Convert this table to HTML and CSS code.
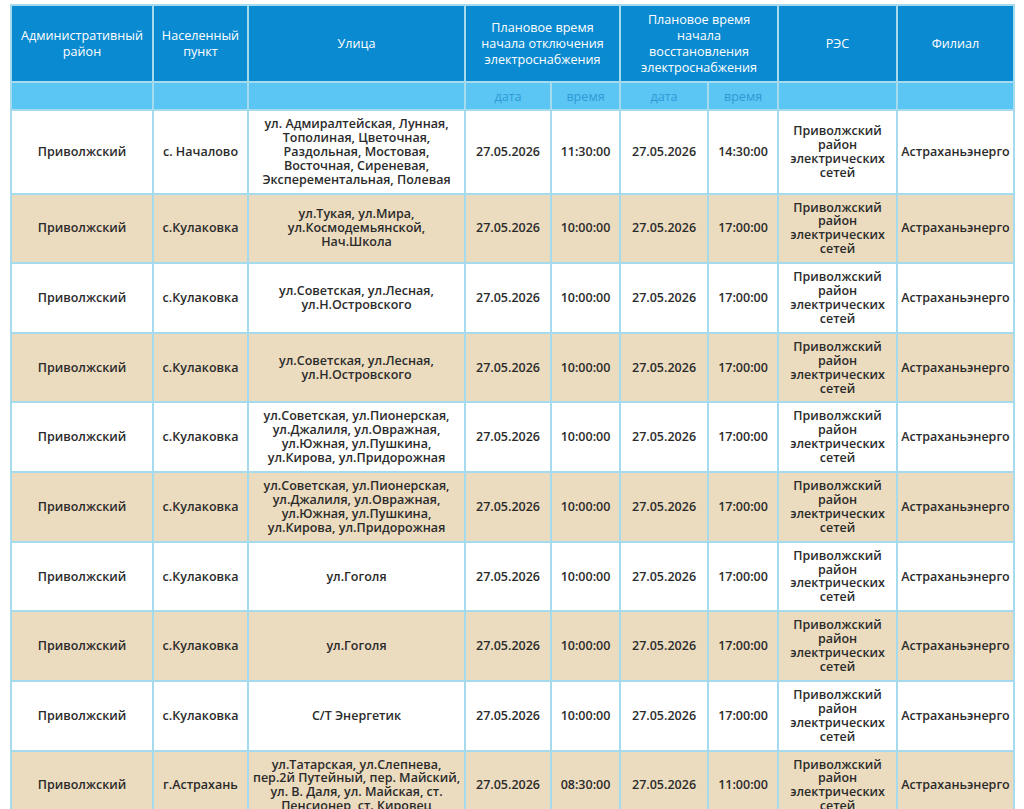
FILE: index.html
```html
<!DOCTYPE html>
<html lang="ru">
<head>
<meta charset="utf-8">
<title>Отключения</title>
<link rel="stylesheet" href="styles.css">
</head>
<body>
<table class="grid">
  <colgroup>
    <col class="c1"><col class="c2"><col class="c3"><col class="c4"><col class="c5"><col class="c6"><col class="c7"><col class="c8"><col class="c9">
  </colgroup>
  <thead>
    <tr class="head">
      <th>Административный<br>район</th>
      <th>Населенный<br>пункт</th>
      <th>Улица</th>
      <th colspan="2">Плановое время<br>начала отключения<br>электроснабжения</th>
      <th colspan="2">Плановое время<br>начала<br>восстановления<br>электроснабжения</th>
      <th>РЭС</th>
      <th>Филиал</th>
    </tr>
    <tr class="sub">
      <th></th><th></th><th></th>
      <th>дата</th><th>время</th><th>дата</th><th>время</th>
      <th></th><th></th>
    </tr>
  </thead>
  <tbody>
    <tr>
      <td>Приволжский</td><td>с. Началово</td>
      <td>ул. Адмиралтейская, Лунная,<br>Тополиная, Цветочная,<br>Раздольная, Мостовая,<br>Восточная, Сиреневая,<br>Эксперементальная, Полевая</td>
      <td>27.05.2026</td><td>11:30:00</td><td>27.05.2026</td><td>14:30:00</td>
      <td>Приволжский<br>район<br>электрических<br>сетей</td><td>Астраханьэнерго</td>
    </tr>
    <tr class="alt">
      <td>Приволжский</td><td>с.Кулаковка</td>
      <td>ул.Тукая, ул.Мира,<br>ул.Космодемьянской,<br>Нач.Школа</td>
      <td>27.05.2026</td><td>10:00:00</td><td>27.05.2026</td><td>17:00:00</td>
      <td>Приволжский<br>район<br>электрических<br>сетей</td><td>Астраханьэнерго</td>
    </tr>
    <tr>
      <td>Приволжский</td><td>с.Кулаковка</td>
      <td>ул.Советская, ул.Лесная,<br>ул.Н.Островского</td>
      <td>27.05.2026</td><td>10:00:00</td><td>27.05.2026</td><td>17:00:00</td>
      <td>Приволжский<br>район<br>электрических<br>сетей</td><td>Астраханьэнерго</td>
    </tr>
    <tr class="alt">
      <td>Приволжский</td><td>с.Кулаковка</td>
      <td>ул.Советская, ул.Лесная,<br>ул.Н.Островского</td>
      <td>27.05.2026</td><td>10:00:00</td><td>27.05.2026</td><td>17:00:00</td>
      <td>Приволжский<br>район<br>электрических<br>сетей</td><td>Астраханьэнерго</td>
    </tr>
    <tr>
      <td>Приволжский</td><td>с.Кулаковка</td>
      <td>ул.Советская, ул.Пионерская,<br>ул.Джалиля, ул.Овражная,<br>ул.Южная, ул.Пушкина,<br>ул.Кирова, ул.Придорожная</td>
      <td>27.05.2026</td><td>10:00:00</td><td>27.05.2026</td><td>17:00:00</td>
      <td>Приволжский<br>район<br>электрических<br>сетей</td><td>Астраханьэнерго</td>
    </tr>
    <tr class="alt">
      <td>Приволжский</td><td>с.Кулаковка</td>
      <td>ул.Советская, ул.Пионерская,<br>ул.Джалиля, ул.Овражная,<br>ул.Южная, ул.Пушкина,<br>ул.Кирова, ул.Придорожная</td>
      <td>27.05.2026</td><td>10:00:00</td><td>27.05.2026</td><td>17:00:00</td>
      <td>Приволжский<br>район<br>электрических<br>сетей</td><td>Астраханьэнерго</td>
    </tr>
    <tr>
      <td>Приволжский</td><td>с.Кулаковка</td>
      <td>ул.Гоголя</td>
      <td>27.05.2026</td><td>10:00:00</td><td>27.05.2026</td><td>17:00:00</td>
      <td>Приволжский<br>район<br>электрических<br>сетей</td><td>Астраханьэнерго</td>
    </tr>
    <tr class="alt">
      <td>Приволжский</td><td>с.Кулаковка</td>
      <td>ул.Гоголя</td>
      <td>27.05.2026</td><td>10:00:00</td><td>27.05.2026</td><td>17:00:00</td>
      <td>Приволжский<br>район<br>электрических<br>сетей</td><td>Астраханьэнерго</td>
    </tr>
    <tr>
      <td>Приволжский</td><td>с.Кулаковка</td>
      <td>С/Т Энергетик</td>
      <td>27.05.2026</td><td>10:00:00</td><td>27.05.2026</td><td>17:00:00</td>
      <td>Приволжский<br>район<br>электрических<br>сетей</td><td>Астраханьэнерго</td>
    </tr>
    <tr class="alt">
      <td>Приволжский</td><td>г.Астрахань</td>
      <td>ул.Татарская, ул.Слепнева,<br>пер.2й Путейный, пер. Майский,<br>ул. В. Даля, ул. Майская, ст.<br>Пенсионер, ст. Кировец</td>
      <td>27.05.2026</td><td>08:30:00</td><td>27.05.2026</td><td>11:00:00</td>
      <td>Приволжский<br>район<br>электрических<br>сетей</td><td>Астраханьэнерго</td>
    </tr>
  </tbody>
</table>
</body>
</html>
```

FILE: styles.css
```css
html, body {
  margin: 0;
  padding: 0;
  background: #ffffff;
}
body {
  padding: 4px 10px 0 10px;
  font-family: "Open Sans", "Noto Sans", "DejaVu Sans", sans-serif;
  color: #2b2b2b;
}
.grid {
  border-collapse: collapse;
  width: 1003px;
  table-layout: fixed;
}
.c1 { width: 142px; }
.c2 { width: 95px; }
.c3 { width: 217px; }
.c4 { width: 86px; }
.c5 { width: 69px; }
.c6 { width: 88px; }
.c7 { width: 70px; }
.c8 { width: 119px; }
.c9 { width: 117px; }

.grid th, .grid td {
  border: 2px solid #a6dbee;
  text-align: center;
  vertical-align: middle;
}
.head th {
  background: #0a8ad0;
  color: #ffffff;
  font-weight: 400;
  font-size: 12.6px;
  line-height: 16px;
  height: 75px;
  padding: 0 2px;
}
.sub th {
  background: #5bc6f3;
  color: #2d9ad6;
  font-weight: 400;
  font-size: 12.6px;
  height: 26px;
  padding: 0;
}
.grid td {
  font-size: 12.5px;
  font-weight: 600;
  line-height: 13.9px;
  padding: 6px 1px;
  background: #ffffff;
}
.grid tr.alt td {
  background: #ecdcbf;
}
```
